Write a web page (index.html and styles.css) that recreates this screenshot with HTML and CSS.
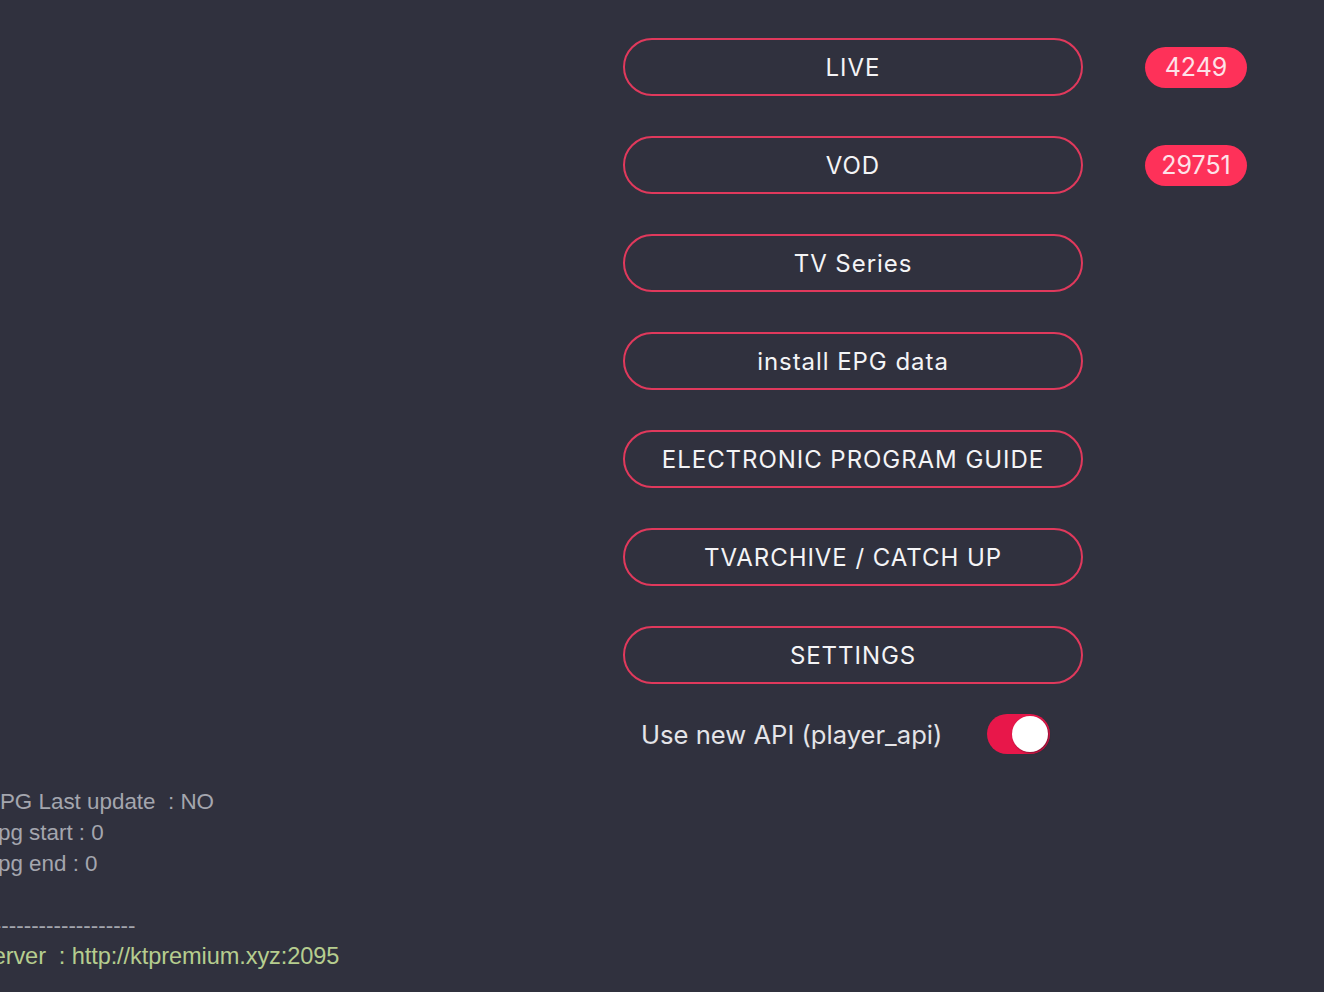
FILE: index.html
```html
<!DOCTYPE html>
<html>
<head>
<meta charset="utf-8">
<link rel="stylesheet" href="styles.css">
</head>
<body>
<div class="page">
  <aside class="side">
    <div class="info">
      <div class="line l1">EPG Last update&nbsp; : NO</div>
      <div class="line l2">Epg start : 0</div>
      <div class="line l2">Epg end : 0</div>
      <div class="line blank">&nbsp;</div>
      <div class="line dash">----------------------------------</div>
      <div class="line server">Server&nbsp; : http://ktpremium.xyz:2095</div>
    </div>
  </aside>
  <main class="menu">
    <div class="row"><button class="btn">LIVE</button><span class="badge">4249</span></div>
    <div class="row"><button class="btn">VOD</button><span class="badge">29751</span></div>
    <div class="row"><button class="btn">TV Series</button></div>
    <div class="row"><button class="btn">install EPG data</button></div>
    <div class="row"><button class="btn">ELECTRONIC PROGRAM GUIDE</button></div>
    <div class="row"><button class="btn">TVARCHIVE / CATCH UP</button></div>
    <div class="row"><button class="btn">SETTINGS</button></div>
    <div class="api">
      <span class="api-label">Use new API (player_api)</span>
      <span class="toggle"><span class="knob"></span></span>
    </div>
  </main>
</div>
</body>
</html>
```

FILE: styles.css
```css
html, body {
  margin: 0;
  padding: 0;
  background: #30313e;
  overflow: hidden;
}
.page {
  width: 1324px;
  height: 992px;
  display: flex;
}
.side {
  width: 623px;
  flex: none;
  overflow: hidden;
  padding-top: 786px;
  box-sizing: border-box;
}
.info {
  font-family: "Liberation Sans", Arial, sans-serif;
  font-size: 22.4px;
  line-height: 31px;
  color: #a4a6ae;
}
.line { white-space: nowrap; }
.l1 { margin-left: -15px; }
.l2 { margin-left: -17px; }
.dash { margin-left: -118px; }
.server {
  margin-left: -23px;
  font-size: 23.6px;
  letter-spacing: -0.1px;
  color: #b6cd8f;
}
.menu {
  padding-top: 38px;
  display: flex;
  flex-direction: column;
  gap: 40px;
}
.row {
  display: flex;
  align-items: center;
  gap: 62px;
}
.btn {
  width: 460px;
  height: 58px;
  box-sizing: border-box;
  border: 2px solid #e0395c;
  border-radius: 29px;
  background: transparent;
  color: #f4f4f6;
  font-family: Inter, "Noto Sans", sans-serif;
  font-size: 24px;
  letter-spacing: 0.95px;
  padding: 0;
  text-align: center;
}
.badge {
  width: 102px;
  height: 41px;
  border-radius: 21px;
  background: #fe3159;
  color: #fde2e8;
  font-family: Inter, "Noto Sans", sans-serif;
  font-size: 25px;
  display: flex;
  align-items: center;
  justify-content: center;
}
.api {
  display: flex;
  align-items: center;
  margin-top: -10px;
  padding-left: 18px;
  gap: 45px;
}
.api-label {
  font-family: Inter, "Noto Sans", sans-serif;
  font-size: 25.6px;
  color: #e4e4e8;
}
.toggle {
  width: 63px;
  height: 40px;
  border-radius: 20px;
  background: #e8174a;
  display: flex;
  align-items: center;
  justify-content: flex-end;
  padding: 0 2px;
  box-sizing: border-box;
}
.knob {
  width: 36px;
  height: 36px;
  border-radius: 50%;
  background: #ffffff;
  box-shadow: 1px 1px 2px rgba(60, 10, 30, 0.6);
}
```
